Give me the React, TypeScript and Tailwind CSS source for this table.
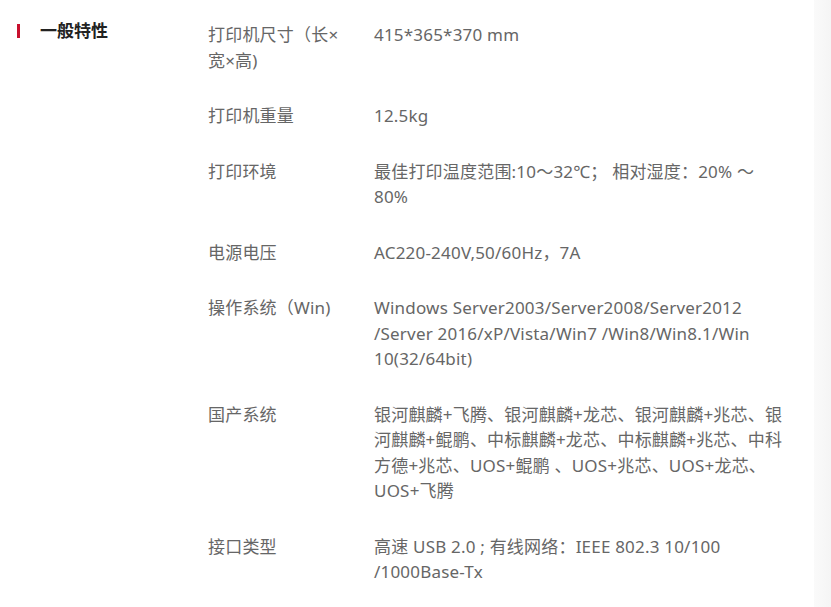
const specs: { label: string[]; value: string[] }[] = [
  { label: ["打印机尺寸（长×", "宽×高)"], value: ["415*365*370 mm"] },
  { label: ["打印机重量"], value: ["12.5kg"] },
  { label: ["打印环境"], value: ["最佳打印温度范围:10～32℃； 相对湿度：20% ～", "80%"] },
  { label: ["电源电压"], value: ["AC220-240V,50/60Hz，7A"] },
  {
    label: ["操作系统（Win)"],
    value: [
      "Windows Server2003/Server2008/Server2012",
      "/Server 2016/xP/Vista/Win7 /Win8/Win8.1/Win",
      "10(32/64bit)",
    ],
  },
  {
    label: ["国产系统"],
    value: [
      "银河麒麟+飞腾、银河麒麟+龙芯、银河麒麟+兆芯、银",
      "河麒麟+鲲鹏、中标麒麟+龙芯、中标麒麟+兆芯、中科",
      "方德+兆芯、UOS+鲲鹏 、UOS+兆芯、UOS+龙芯、",
      "UOS+飞腾",
    ],
  },
  { label: ["接口类型"], value: ["高速 USB 2.0 ; 有线网络：IEEE 802.3 10/100", "/1000Base-Tx"] },
];

const App = () => {
  return (
    <div className="flex min-h-[607px] w-[831px] bg-white font-['Noto_Sans','Noto_Sans_CJK_SC',sans-serif]">
      <div className="flex flex-1">
        <div className="w-[208px] shrink-0 pl-[17px] pt-[19px]">
          <div className="flex items-center gap-[20px]">
            <span className="h-[14px] w-[3px] bg-[#c8102e]" />
            <h2 className="text-[17px] font-bold leading-[24px] text-[#222]">一般特性</h2>
          </div>
        </div>

        <div className="flex flex-col gap-[30px] pt-[22px]">
          {specs.map((row) => (
            <div key={row.label[0]} className="flex text-[17px] leading-[25.5px] tracking-[0.2px] text-[#666]">
              <div className="w-[166px] shrink-0">
                {row.label.map((l) => (
                  <div key={l} className="whitespace-nowrap">{l}</div>
                ))}
              </div>
              <div>
                {row.value.map((v) => (
                  <div key={v} className="whitespace-nowrap">{v}</div>
                ))}
              </div>
            </div>
          ))}
        </div>
      </div>

      <div className="w-[17px] shrink-0 bg-gradient-to-r from-[#fafafa] to-[#f5f5f5]" />
    </div>
  );
};

export default App;
